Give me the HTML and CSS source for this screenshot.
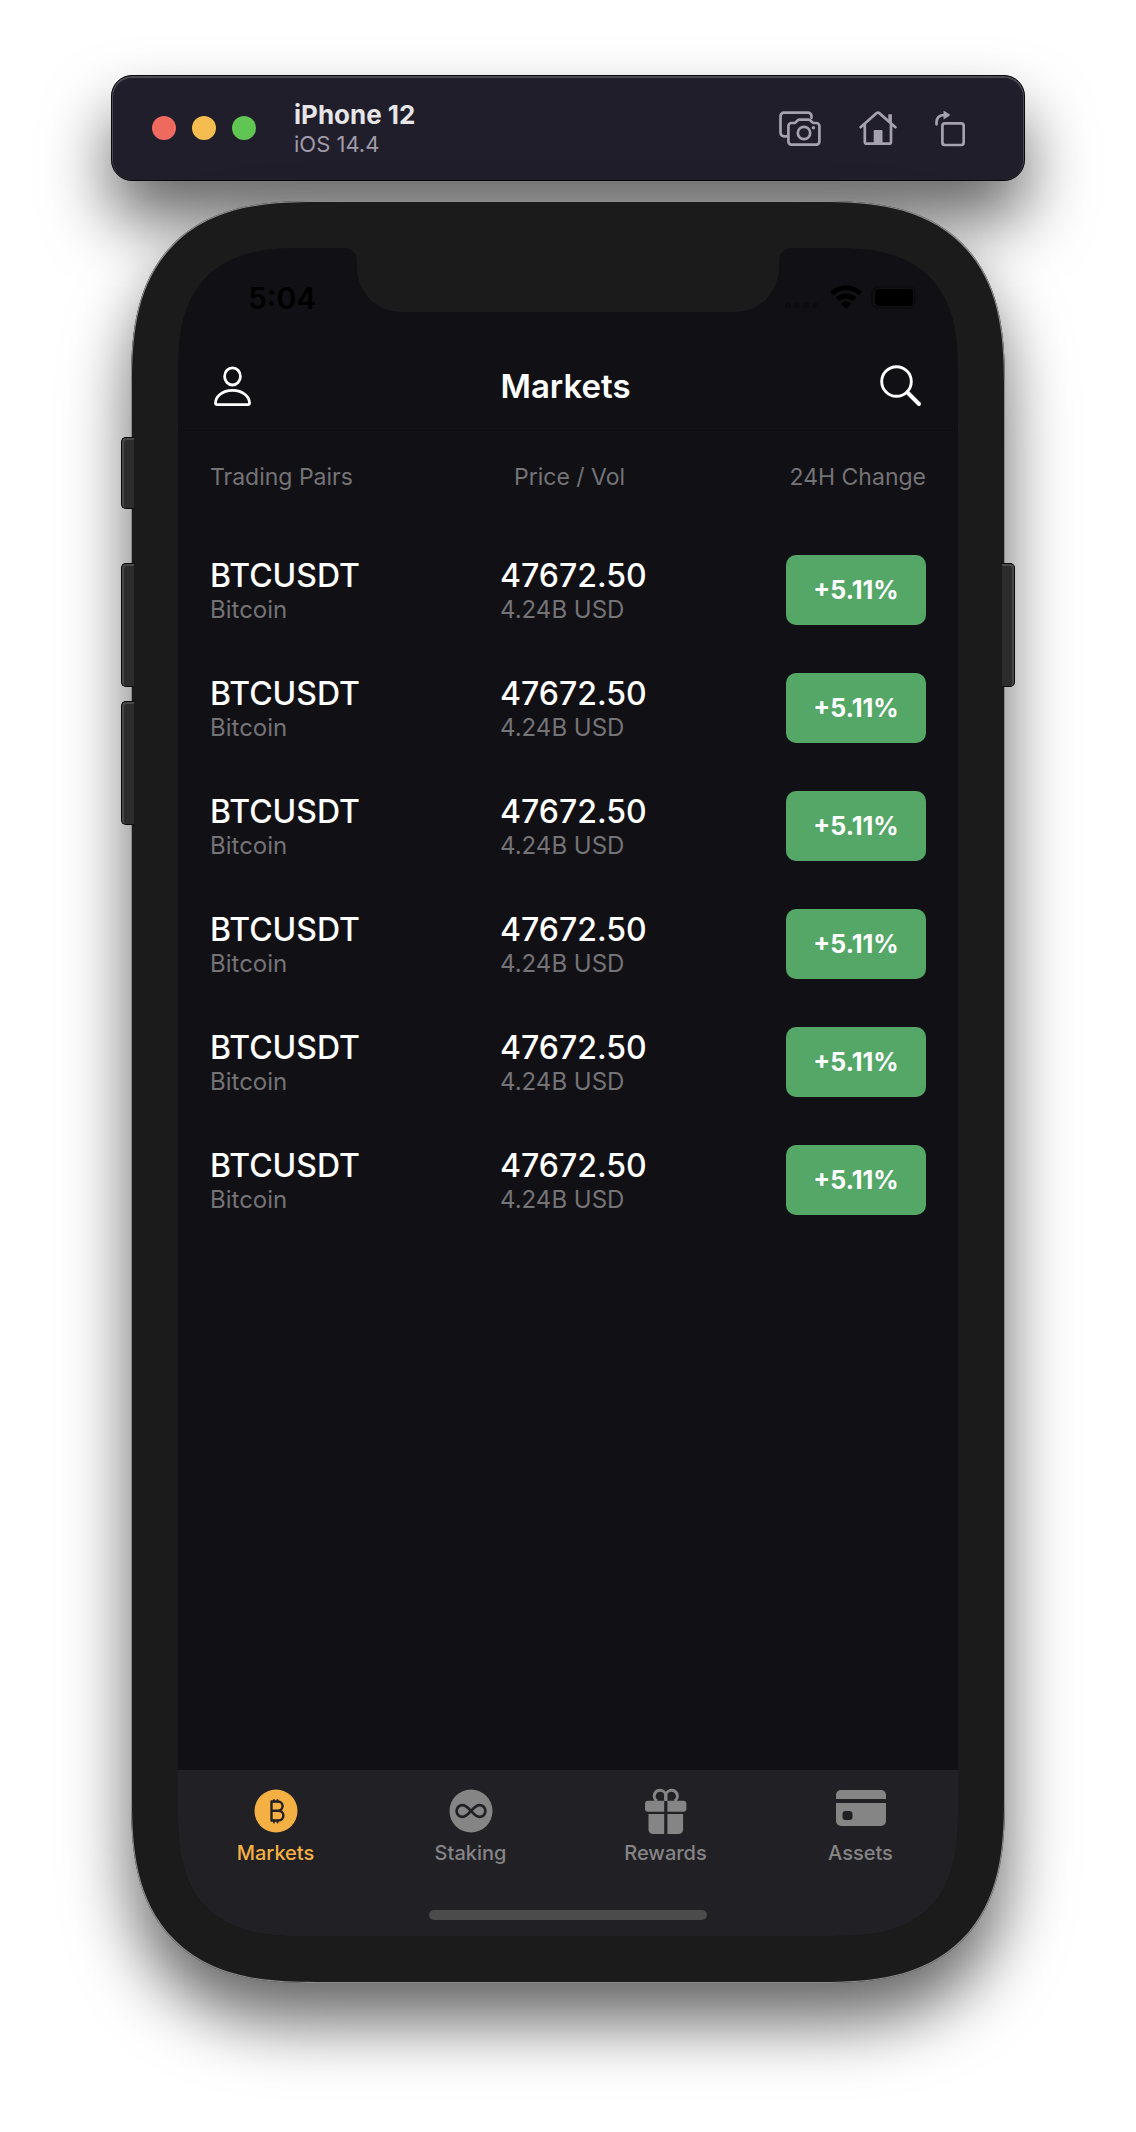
FILE: index.html
```html
<!DOCTYPE html>
<html lang="en">
<head>
<meta charset="utf-8">
<meta name="viewport" content="width=device-width, initial-scale=1">
<title>Markets</title>
<link rel="stylesheet" href="styles.css">
</head>
<body>
<div class="desktop">
  <header class="toolbar">
    <div class="lights"><span class="light light-red"></span><span class="light light-yellow"></span><span class="light light-green"></span></div>
    <div class="device-info">
      <div class="device-name">iPhone 12</div>
      <div class="device-os">iOS 14.4</div>
    </div>
    <div class="tools">
      <button class="tool" type="button" aria-label="Screenshot">
        <svg width="42" height="37" viewBox="0 0 42 37" fill="none" stroke="currentColor" stroke-width="2.7" stroke-linecap="round" stroke-linejoin="round"><path d="M7.5 26.3H5a3.5 3.5 0 0 1-3.5-3.5V6.2A3.5 3.5 0 0 1 5 2.7h24a3.5 3.5 0 0 1 3.5 3.5v1.6"/><path d="M12.4 13h3.1c1.8 0 2.6-3.4 5-3.4h9c2.4 0 3.2 3.4 5 3.4h2.9a3 3 0 0 1 3 3v15.6a3 3 0 0 1-3 3h-25a3 3 0 0 1-3-3V16a3 3 0 0 1 3-3z"/><circle cx="25" cy="23" r="6.2"/><circle cx="34.4" cy="17.8" r="1.7" fill="currentColor" stroke="none"/></svg>
      </button>
      <button class="tool" type="button" aria-label="Home">
        <svg width="38" height="36" viewBox="0 0 38 36" fill="none" stroke="currentColor" stroke-width="2.7" stroke-linecap="round" stroke-linejoin="round"><path d="M1.6 17.2 17.7 3.1q1.3-1.1 2.6 0l16.1 14.1"/><path d="M5.8 14.5v17.2a2 2 0 0 0 2 2H30a2 2 0 0 0 2-2V14.5"/><path d="M29.3 9.5V4.2h3.6v9.2z" fill="currentColor" stroke="none"/><path d="M14.7 34V21q0-1 1-1h6.8q1 0 1 1v13z" fill="currentColor" stroke="none"/></svg>
      </button>
      <button class="tool" type="button" aria-label="Rotate">
        <svg width="30" height="37" viewBox="0 0 30 37" fill="none" stroke="currentColor" stroke-width="2.7" stroke-linecap="round"><rect x="7.4" y="13.4" width="21.3" height="21.6" rx="2.5"/><path d="M1.5 14.3v-1.8c0-4.7 2.6-7.5 7.7-7.5"/><path d="M8.5 1.4v7.2q0 1 .8.3l5.2-3.2q.8-.7 0-1.4L9.3 1q-.8-.5-.8.4z" fill="currentColor" stroke="none"/></svg>
      </button>
    </div>
  </header>

  <div class="phone">
    <span class="side-key key-mute"></span>
    <span class="side-key key-up"></span>
    <span class="side-key key-down"></span>
    <span class="side-key key-power"></span>
    <div class="screen">
      <div class="notch"></div>
      <div class="status">
        <span class="clock">5:04</span>
        <svg width="134" height="26" viewBox="0 0 134 26"><g fill="#0d0c10"><circle cx="4" cy="20.5" r="3"/><circle cx="13" cy="20.5" r="3"/><circle cx="22.3" cy="20.5" r="3"/><circle cx="31.7" cy="20.5" r="3"/></g><g fill="none" stroke="#000" stroke-width="5"><path d="M47.8 8.6a20.5 20.5 0 0 1 28.6 0"/><path d="M53.4 14.4a12.6 12.6 0 0 1 17.4 0"/></g><path d="M62.1 23.7l-5.1-5q5.1-4.4 10.2 0z"/><rect x="88" y="2" width="43" height="21" rx="6" fill="none" stroke="#0c0b0e" stroke-width="2"/><rect x="91" y="4" width="38" height="17" rx="4"/><path d="M133 9q2 3.500 0 7z" fill="#0c0b0e"/></svg>
      </div>
      <nav class="navbar">
        <button class="nav-button" type="button" aria-label="Profile">
          <svg width="38" height="41" viewBox="0 0 38 41" fill="none" stroke="currentColor" stroke-width="2.8" stroke-linejoin="round"><ellipse cx="19.5" cy="10.4" rx="7.9" ry="8.6"/><path d="M4.2 38.6c-1 0-1.7-.6-1.7-1.6 0-5.8 6-12.6 17-12.6s17 6.8 17 12.6c0 1-.7 1.6-1.7 1.6z"/></svg>
        </button>
        <h1 class="nav-title">Markets</h1>
        <button class="nav-button" type="button" aria-label="Search">
          <svg width="42" height="42" viewBox="0 0 42 42" fill="none" stroke="currentColor" stroke-linecap="round"><circle cx="16.5" cy="16.5" r="14.8" stroke-width="2.9"/><path d="M27.5 27.5l11.5 11.5" stroke-width="4"/></svg>
        </button>
      </nav>
      <main class="content">
        <table class="markets">
          <thead>
            <tr><th class="col-pair">Trading Pairs</th><th class="col-price">Price / Vol</th><th class="col-change">24H Change</th></tr>
          </thead>
          <tbody>
            <tr><td><div class="main-line">BTCUSDT</div><div class="sub-line">Bitcoin</div></td><td><div class="main-line">47672.50</div><div class="sub-line">4.24B USD</div></td><td><div class="badge">+5.11%</div></td></tr>
            <tr><td><div class="main-line">BTCUSDT</div><div class="sub-line">Bitcoin</div></td><td><div class="main-line">47672.50</div><div class="sub-line">4.24B USD</div></td><td><div class="badge">+5.11%</div></td></tr>
            <tr><td><div class="main-line">BTCUSDT</div><div class="sub-line">Bitcoin</div></td><td><div class="main-line">47672.50</div><div class="sub-line">4.24B USD</div></td><td><div class="badge">+5.11%</div></td></tr>
            <tr><td><div class="main-line">BTCUSDT</div><div class="sub-line">Bitcoin</div></td><td><div class="main-line">47672.50</div><div class="sub-line">4.24B USD</div></td><td><div class="badge">+5.11%</div></td></tr>
            <tr><td><div class="main-line">BTCUSDT</div><div class="sub-line">Bitcoin</div></td><td><div class="main-line">47672.50</div><div class="sub-line">4.24B USD</div></td><td><div class="badge">+5.11%</div></td></tr>
            <tr><td><div class="main-line">BTCUSDT</div><div class="sub-line">Bitcoin</div></td><td><div class="main-line">47672.50</div><div class="sub-line">4.24B USD</div></td><td><div class="badge">+5.11%</div></td></tr>
          </tbody>
        </table>
      </main>
      <footer class="tabbar">
        <nav class="tabs">
          <a class="tab tab-active" href="#markets">
            <svg width="50" height="50" viewBox="0 0 50 50"><circle cx="25" cy="25" r="21.5" fill="currentColor"/><g fill="none" stroke="#212025" stroke-width="2.4" stroke-linecap="round" stroke-linejoin="round"><path d="M20.5 15.500h6.500a4.600 4.600 0 0 1 0 9.200h-6.500zM20.500 24.700h7a4.900 4.900 0 0 1 0 9.800h-7z"/><path d="M23 16v-2M26.5 16v-2M23 36.500v-2M26.500 36.500v-2" stroke-width="1.8"/></g></svg>
            <span>Markets</span>
          </a>
          <a class="tab" href="#staking">
            <svg width="50" height="50" viewBox="0 0 50 50"><circle cx="25" cy="25" r="21.5" fill="currentColor"/><path d="M25 25c-3-3.300-5.200-5.900-8.500-5.900a5.900 5.900 0 0 0 0 11.800c3.300 0 5.500-2.600 8.500-5.900s5.200-5.900 8.500-5.900a5.900 5.900 0 0 1 0 11.800c-3.300 0-5.500-2.600-8.500-5.900z" fill="none" stroke="#212025" stroke-width="2.7"/></svg>
            <span>Staking</span>
          </a>
          <a class="tab" href="#rewards">
            <svg width="50" height="50" viewBox="0 0 50 50" fill="currentColor"><g fill="none" stroke="currentColor" stroke-width="3"><path d="M24.800 15v-4.600a5.800 5.800 0 1 0-8.800 4.600"/><path d="M24.800 15v-4.600a5.800 5.800 0 1 1 8.800 4.600"/></g><path d="M23.200 14.800v11H7a3 3 0 0 1-3-3v-5a3 3 0 0 1 3-3zM26.400 14.800v11h16a3 3 0 0 0 3-3v-5a3 3 0 0 0-3-3zM23.200 28v20H12a4.500 4.500 0 0 1-4.500-4.500V28zM26.400 28v20h11.200a4.500 4.500 0 0 0 4.500-4.500V28z"/></svg>
            <span>Rewards</span>
          </a>
          <a class="tab" href="#assets">
            <svg width="50" height="50" viewBox="0 0 50 50" fill="currentColor"><path d="M0 13V9a5 5 0 0 1 5-5h40a5 5 0 0 1 5 5v4z"/><path fill-rule="evenodd" d="M0 17h50v18a5 5 0 0 1-5 5H5a5 5 0 0 1-5-5zM9.500 25A3 3 0 0 0 6.500 28v3a3 3 0 0 0 3 3h4a3 3 0 0 0 3-3v-3a3 3 0 0 0-3-3z"/></svg>
            <span>Assets</span>
          </a>
        </nav>
        <div class="home-indicator"></div>
      </footer>
    </div>
  </div>
</div>
</body>
</html>
```

FILE: styles.css
```css
* {
  box-sizing: border-box;
}

body {
  margin: 0;
  background: #fff;
  font-family: Inter, "Liberation Sans", sans-serif;
}

button {
  margin: 0;
  padding: 0;
  border: 0;
  background: none;
  color: inherit;
}

svg {
  display: block;
}

.desktop {
  display: flex;
  flex-direction: column;
  gap: 20px;
  min-height: 100vh;
  padding: 75px 111px 149px;
}

/* Simulator toolbar */

.toolbar {
  display: flex;
  align-items: center;
  gap: 38px;
  height: 106px;
  padding: 0 59px 0 40px;
  border: 1px solid #08080a;
  border-radius: 21px;
  background: #211e2b;
  box-shadow: inset 0 1px 0 1px #4c4a53, 0 39px 66px rgba(0, 0, 0, 0.6);
}

.lights {
  display: flex;
  gap: 16px;
}

.light {
  width: 24px;
  height: 24px;
  border-radius: 50%;
}

.light-red {
  background: #ee6a5f;
}

.light-yellow {
  background: #f5bd4f;
}

.light-green {
  background: #61c554;
}

.device-info {
  padding-top: 2px;
}

.device-name {
  font-size: 26px;
  line-height: 30px;
  font-weight: 700;
  color: #e6e5e7;
}

.device-os {
  font-size: 22px;
  line-height: 28px;
  color: #9f9ba8;
}

.tools {
  display: flex;
  gap: 38px;
  margin-left: auto;
  color: #a5a1af;
}

/* Phone body */

.phone {
  position: relative;
  display: flex;
  flex: 1;
  margin: 0 20px;
  padding: 47px;
  border-radius: 142px;
  background: #1b1b1b;
  box-shadow: inset 0 0 0 1px #8c8c8c, 0 39px 66px rgba(0, 0, 0, 0.6);
}

.side-key {
  position: absolute;
  left: -10px;
  width: 13px;
  height: 124px;
  border: 1px solid #080808;
  border-right: 0;
  border-radius: 5px 0 0 5px;
  background: #2c2c2c;
  box-shadow: inset 1px 1px 0 1px #484848;
}

.key-mute {
  top: 236px;
  height: 72px;
}

.key-up {
  top: 362px;
}

.key-down {
  top: 500px;
}

.key-power {
  top: 362px;
  right: -10px;
  left: auto;
  border-right: 1px solid #080808;
  border-left: 0;
  border-radius: 0 5px 5px 0;
  box-shadow: inset -1px 1px 0 1px #484848;
}

.screen {
  position: relative;
  display: flex;
  flex: 1;
  flex-direction: column;
  min-width: 0;
  overflow: hidden;
  border-radius: 94px;
  background: #111015;
  color: #fff;
}

@supports (corner-shape: superellipse(1.4)) {
  .phone {
    border-radius: 184px;
    corner-shape: superellipse(1.4);
  }

  .screen {
    border-radius: 124px;
    corner-shape: superellipse(1.4);
  }
}

.notch {
  position: absolute;
  top: 0;
  left: 23%;
  right: 23%;
  height: 64px;
  border-radius: 0 0 44px 44px;
  background: #1b1b1b;
}

.notch::before,
.notch::after {
  content: "";
  position: absolute;
  top: 0;
  width: 12px;
  height: 12px;
}

.notch::before {
  right: 100%;
  background: radial-gradient(circle at 0 100%, transparent 12px, #1b1b1b 12px);
}

.notch::after {
  left: 100%;
  background: radial-gradient(circle at 100% 100%, transparent 12px, #1b1b1b 12px);
}

.status {
  display: flex;
  align-items: center;
  justify-content: space-between;
  height: 94px;
  padding: 6px 40px 0 70px;
  color: #000;
}

.clock {
  font-size: 30px;
  line-height: 36px;
  font-weight: 600;
}

.navbar {
  display: flex;
  align-items: center;
  justify-content: space-between;
  height: 89px;
  padding: 0 36px 0 35px;
  border-bottom: 1px solid #0e0d12;
}

.nav-title {
  margin: 0;
  font-size: 33px;
  line-height: 40px;
  font-weight: 600;
}

/* Market list */

.content {
  flex: 1;
  padding: 0 32px;
}

.markets {
  width: 100%;
  border-collapse: collapse;
  table-layout: fixed;
}

.markets th {
  height: 100px;
  padding: 0 0 8px;
  font-size: 23px;
  line-height: 30px;
  font-weight: 400;
  text-align: left;
  white-space: nowrap;
  color: #747376;
}

.markets .col-pair {
  width: 290px;
}

.markets .col-price {
  padding-left: 14px;
}

.markets .col-change {
  width: 140px;
  text-align: right;
}

.markets td {
  height: 118px;
  padding: 0;
}

.main-line {
  font-size: 32px;
  line-height: 40px;
  font-weight: 500;
}

.sub-line {
  font-size: 24px;
  line-height: 28px;
  color: #747376;
}

.badge {
  border-radius: 10px;
  background: #54a766;
  font-size: 25px;
  line-height: 70px;
  font-weight: 700;
  text-align: center;
}

/* Bottom tabs */

.tabbar {
  height: 166px;
  padding-top: 16px;
  background: #212025;
}

.tabs {
  display: grid;
  grid-template-columns: repeat(4, 1fr);
}

.tab {
  display: flex;
  flex-direction: column;
  align-items: center;
  font-size: 20px;
  line-height: 34px;
  font-weight: 500;
  text-decoration: none;
  color: #858585;
}

.tab-active {
  color: #f5b043;
}

.home-indicator {
  width: 278px;
  height: 10px;
  margin: 40px auto 0;
  border-radius: 5px;
  background: #4b4b4b;
}
```
